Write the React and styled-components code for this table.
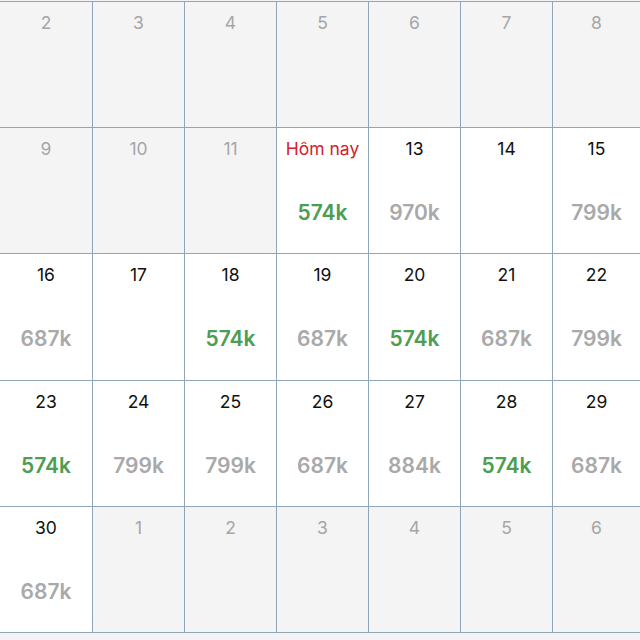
import React from 'react'
import styled, { createGlobalStyle } from 'styled-components'

const Global = createGlobalStyle`
    body {
        margin: 0;
        background: #f3f3f5;
        font-family: Inter, "Noto Sans", sans-serif;
    }
`

const Page = styled.div`
    width: 640px;
    height: 640px;
    overflow: hidden;
    background: #f3f3f5;
`

const Grid = styled.div`
    width: 640px;
    margin-top: 1px;
    display: grid;
    grid-template-columns: 92px repeat(5, 91px) 1fr;
    grid-auto-rows: 125.2px;
    gap: 1px;
    background: #8fa6b8;
    border-top: 1px solid #8fa6b8;
    border-bottom: 1px solid #8fa6b8;
`

const Cell = styled.div`
    background: ${p => (p.$muted ? '#f4f4f5' : '#ffffff')};
    display: flex;
    flex-direction: column;
    align-items: center;
    padding-top: 10px;
`

const Day = styled.div`
    font-size: 17.5px;
    line-height: 22px;
    color: ${p => (p.$today ? '#d4202c' : p.$muted ? '#a6a6a6' : '#111111')};
`

const Price = styled.div`
    margin-top: 40px;
    font-size: 21px;
    font-weight: 600;
    line-height: 26px;
    color: ${p => (p.$cheap ? '#4d9e52' : '#a9a9a9')};
`

const cells = [
    ['2', null, 'muted'], ['3', null, 'muted'], ['4', null, 'muted'], ['5', null, 'muted'],
    ['6', null, 'muted'], ['7', null, 'muted'], ['8', null, 'muted'],
    ['9', null, 'muted'], ['10', null, 'muted'], ['11', null, 'muted'], ['Hôm nay', '574k', 'today'],
    ['13', '970k'], ['14', null], ['15', '799k'],
    ['16', '687k'], ['17', null], ['18', '574k'], ['19', '687k'], ['20', '574k'], ['21', '687k'], ['22', '799k'],
    ['23', '574k'], ['24', '799k'], ['25', '799k'], ['26', '687k'], ['27', '884k'], ['28', '574k'], ['29', '687k'],
    ['30', '687k'], ['1', null, 'muted'], ['2', null, 'muted'], ['3', null, 'muted'],
    ['4', null, 'muted'], ['5', null, 'muted'], ['6', null, 'muted'],
]

const App = () => {
    return (
        <Page>
            <Global />
            <Grid>
                {cells.map(([day, price, kind], i) => (
                    <Cell key={i} $muted={kind === 'muted'}>
                        <Day $muted={kind === 'muted'} $today={kind === 'today'}>{day}</Day>
                        {price && <Price $cheap={price === '574k'}>{price}</Price>}
                    </Cell>
                ))}
            </Grid>
        </Page>
    )
}

export default App
